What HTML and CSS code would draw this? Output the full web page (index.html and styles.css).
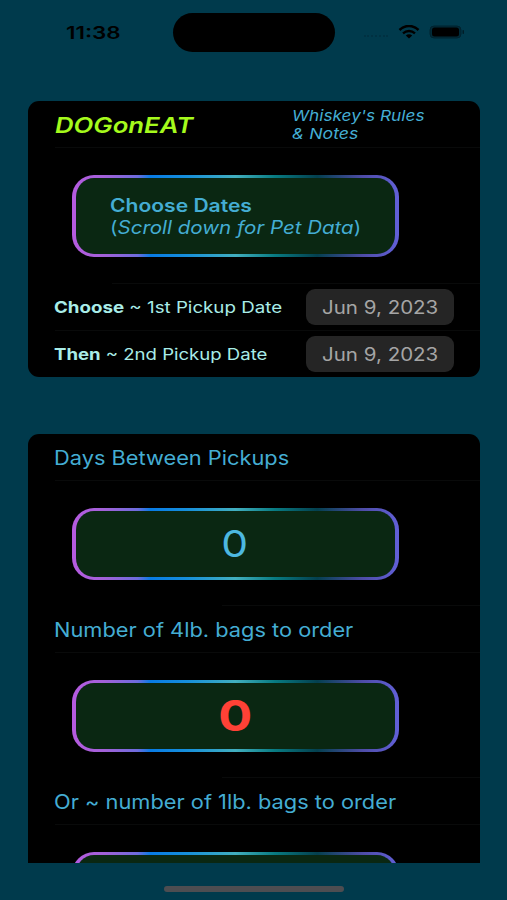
FILE: index.html
```html
<!DOCTYPE html>
<html lang="en">
<head>
<meta charset="utf-8">
<title>DOGonEAT</title>
<link rel="stylesheet" href="styles.css">
</head>
<body>
<div class="phone">
  <header class="status">
    <span class="time wide">11:38</span>
    <div class="island"></div>
    <div class="indicators">
      <i class="dots"></i>
      <svg class="wifi" viewBox="0 0 22 14" width="22" height="14" fill="none" stroke="#000">
        <path d="M1.500 5C7-.4 15-.4 20.500 5" stroke-width="2.500"/>
        <path d="M5 8.400C8.500 5.200 13.500 5.200 17 8.400" stroke-width="2.300"/>
        <path d="M7.800 10.500C9.500 8.900 12.500 8.900 14.200 10.500L11 13.500Z" fill="#000" stroke="none"/>
      </svg>
      <svg class="battery" viewBox="0 0 36 14" width="36" height="14">
        <rect x="1" y="1" width="31" height="12" rx="4" fill="#002b39" stroke="#00222e"/>
        <rect x="3" y="2.500" width="27" height="9" rx="2.500"/>
        <rect x="33.500" y="5" width="1.500" height="4" rx=".7" fill="#001d27"/>
      </svg>
    </div>
  </header>

  <section class="card dates">
    <div class="row heading">
      <h1 class="brand"><span class="wide">DOGonEAT</span></h1>
      <a class="rules"><span class="wide">Whiskey's Rules</span><span class="wide rules-b">&amp; Notes</span></a>
    </div>
    <div class="row boxed">
      <div class="pill intro">
        <strong class="wide intro-a">Choose Dates</strong>
        <span class="wide intro-b">(<em>Scroll down for Pet Data</em>)</span>
      </div>
    </div>
    <div class="row pick first">
      <span class="label"><span class="wide label-a"><b>Choose</b> ~ 1st Pickup Date</span></span>
      <span class="date"><span class="wide">Jun 9, 2023</span></span>
    </div>
    <div class="row pick">
      <span class="label"><span class="wide label-b"><b>Then</b> ~ 2nd Pickup Date</span></span>
      <span class="date"><span class="wide">Jun 9, 2023</span></span>
    </div>
  </section>

  <section class="card results">
    <div class="row title"><span class="wide">Days Between Pickups</span></div>
    <div class="row value"><div class="pill"><span class="wide days">0</span></div></div>
    <div class="row title"><span class="wide">Number of 4lb. bags to order</span></div>
    <div class="row value"><div class="pill"><span class="wide bags">0</span></div></div>
    <div class="row title"><span class="wide">Or ~ number of 1lb. bags to order</span></div>
    <div class="row value"><div class="pill"></div></div>
  </section>
  <div class="home"></div>
</div>
</body>
</html>
```
FILE: styles.css
```css
* { box-sizing: border-box; }
body { margin: 0; background: #003a4c; font-family: Inter, sans-serif; color: #44add3; }
.phone { height: 900px; overflow: hidden; padding: 0 27px 0 28px; display: flex; flex-direction: column; }

/* Expanded-width lettering */
.wide { display: inline-block; white-space: nowrap; transform: scaleX(var(--sx, 1.15)); transform-origin: left center; }

.status { height: 101px; flex: none; display: grid; grid-template-columns: 145px 162px 1fr; padding-top: 12.500px; color: #000; }
.time { --sx: 1.28; font-size: 17.500px; font-weight: 600; line-height: 39px; margin-left: 38px; justify-self: start; height: 39px; }
.island { height: 39px; border-radius: 20px; background: #000; }
.indicators { height: 39px; display: flex; align-items: center; padding-left: 29px; }
.dots { width: 24px; border-top: 2px dotted #003142; margin-top: 8px; }
.wifi { margin-left: 10px; }
.battery { margin-left: 9px; }

.card { background: #000; flex: none; overflow: hidden; }
.dates { height: 275.500px; border-radius: 11px; }
.results { height: 429px; margin-top: 57.500px; border-radius: 11px 11px 0 0; }
.row { display: flex; position: relative; }
.row::after { content: ""; position: absolute; left: 27px; right: 0; bottom: 0; height: 1px; background: #090a0a; }
.row:last-child::after { display: none; }

.heading { height: 47px; padding: 0 0 0 27px; align-items: center; }
.brand { margin: 0; width: 237px; font-size: 22px; font-weight: 600; font-style: italic; color: #a5fa1c; line-height: 45px; padding-top: 2px; }
.brand .wide { --sx: 1.17; }
.rules { display: flex; flex-direction: column; align-items: flex-start; font-size: 15px; line-height: 18px; font-style: italic; padding-top: 1px; }
.rules-b { --sx: 1.18; }

.boxed { height: 136px; padding: 26.500px 0 0 44px; }
.boxed::after { left: 84px; }
.pill {
  width: 326.500px; height: 72px; border: solid transparent; border-width: 3px 4px; border-radius: 22px;
  display: flex; align-items: center; justify-content: center;
  background:
    linear-gradient(#0a2712, #0a2712) padding-box,
    linear-gradient(90deg, #b65be0 0, #a261d8 10%, #6e6cdd 20%, #087be5 24%, #168fdb 35%, #42afbf 50%, #087b82 62%, #04404f 75%, #4e4ca7 89%, #6260d8 100%) border-box;
}
.intro { height: 82px; flex-direction: column; align-items: flex-start; padding-left: 34px; font-size: 18px; line-height: 22px; padding-top: 2px; }
.intro-a { --sx: 1.17; font-weight: 600; }
.intro-b { --sx: 1.14; }

.pick { height: 46px; align-items: center; padding-left: 26px; font-size: 16px; color: #a9ede8; }
.pick.first { height: 47px; padding-bottom: 1px; }
.label { width: 252px; flex: none; }
.label-a { --sx: 1.17; }
.label-b { --sx: 1.16; }
.date { width: 148px; height: 36px; border-radius: 9px; background: #252525; color: #a5a5a5; font-size: 18px; line-height: 36px; padding: 1px 0 0 16px; }
.date .wide { --sx: 1.14; }

.title { height: 47px; padding-left: 26px; padding-top: 1px; font-size: 19.500px; line-height: 46px; }
.title .wide { --sx: 1.118; }
.value { height: 125px; padding: 26.500px 0 0 44px; }
.value::after { left: 194px; }
.days, .bags { transform-origin: center; }
.days { font-size: 37px; line-height: 44px; color: #4db8e0; margin-right: 1px; }
.bags { --sx: 1.2; font-size: 42px; line-height: 44px; font-weight: 700; color: #ff4136; margin-right: 1px; }

.home { width: 180px; height: 6px; border-radius: 3px; background: #4d4d51; margin: 23px 0 0 136px; flex: none; }
```
